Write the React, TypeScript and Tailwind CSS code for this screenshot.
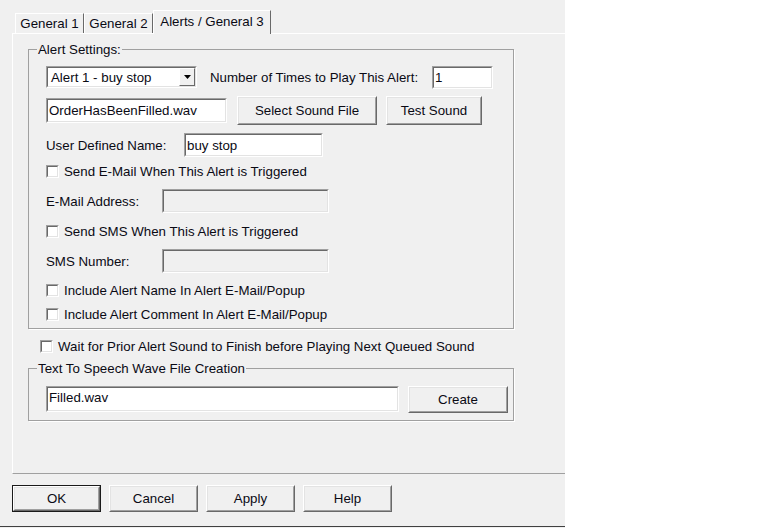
import React from 'react';

type BoxProps = {
  className?: string;
  disabled?: boolean;
  children?: React.ReactNode;
};

// Classic sunken edit box
const Sunken = ({ className = '', disabled = false, children }: BoxProps) => (
  <div
    className={`border border-t-[#a0a0a0] border-l-[#a0a0a0] border-r-white border-b-white ${className}`}
  >
    <div
      className={`flex h-full w-full items-center border border-t-[#696969] border-l-[#696969] border-r-[#e3e3e3] border-b-[#e3e3e3] pl-px ${
        disabled ? 'bg-[#f0f0f0]' : 'bg-white'
      }`}
    >
      {children}
    </div>
  </div>
);

type ButtonProps = {
  label: string;
  className?: string;
  isDefault?: boolean;
};

const Button = ({ label, className = '', isDefault = false }: ButtonProps) => (
  <button
    type="button"
    className={`block ${isDefault ? 'border border-[#1a1a1a]' : ''} ${className}`}
  >
    <div className="h-full border border-t-white border-l-white border-r-[#696969] border-b-[#696969]">
      <div className="flex h-full items-center justify-center border border-t-[#e3e3e3] border-l-[#e3e3e3] border-r-[#a0a0a0] border-b-[#a0a0a0] bg-[#f0f0f0]">
        {label}
      </div>
    </div>
  </button>
);

const Check = ({ label, className = '' }: { label: string; className?: string }) => (
  <div className={`flex items-center gap-[5px] ${className}`}>
    <span className="block h-[13px] w-[13px] border border-t-[#a0a0a0] border-l-[#a0a0a0] border-r-white border-b-white">
      <span className="block h-full w-full border border-t-[#696969] border-l-[#696969] border-r-[#e3e3e3] border-b-[#e3e3e3] bg-white" />
    </span>
    <span className="whitespace-nowrap">{label}</span>
  </div>
);

const Combo = () => (
  <Sunken className="h-[22px] w-[151px]">
    <span className="flex-1 pl-[2px]">Alert 1 - buy stop</span>
    <span className="h-full w-[16px] border border-t-white border-l-white border-r-[#696969] border-b-[#696969] bg-[#f0f0f0]">
      <span className="flex h-full items-center justify-center">
        <svg width="7" height="4" viewBox="0 0 7 4">
          <path d="M0 0h7L3.5 4z" fill="#000" />
        </svg>
      </span>
    </span>
  </Sunken>
);

export default function App() {
  return (
    <div className="flex h-[528px] w-[565px] flex-col bg-[#f0f0f0] pt-[10px] font-['Liberation_Sans',Arial,sans-serif] text-[13.3px] leading-[15px] text-[#0a0a14]">
      {/* tab strip */}
      <div className="flex h-[23px] items-end pl-[15px]">
        <div className="flex h-[20px] w-[69px] items-center justify-center border border-b-0 border-t-white border-l-white border-r-[#696969]">
          General 1
        </div>
        <div className="flex h-[20px] w-[69px] items-center justify-center border border-b-0 border-t-white border-l-white border-r-[#696969]">
          General 2
        </div>
        <div className="relative z-10 -mb-px flex h-[24px] w-[118px] items-start justify-center border border-b-0 border-t-white border-l-white border-r-[#696969] bg-[#f0f0f0] pt-[3px]">
          Alerts / General 3
        </div>
      </div>

      {/* tab page */}
      <div className="ml-[12px] h-[441px] w-[553px] border-t border-l border-b border-t-white border-l-white border-b-[#a0a0a0] pt-[8px] pl-[15px]">
        <fieldset className="w-[486px] border border-[#a0a0a0] pl-[8px] pb-[4px] shadow-[1px_1px_0_#fff]">
          <legend className="px-px">Alert Settings:</legend>
          <div className="ml-[9px] flex flex-col">
            <div className="mt-[8px] flex h-[24px] items-center">
              <Combo />
              <span className="ml-[13px] w-[222px] whitespace-nowrap">Number of Times to Play This Alert:</span>
              <Sunken className="h-[23px] w-[61px]">1</Sunken>
            </div>

            <div className="mt-[7px] flex h-[29px] items-center">
              <Sunken className="h-[25px] w-[181px]">OrderHasBeenFilled.wav</Sunken>
              <Button label="Select Sound File" className="ml-[10px] h-[29px] w-[140px]" />
              <Button label="Test Sound" className="ml-[9px] h-[29px] w-[96px]" />
            </div>

            <div className="mt-[8px] flex h-[24px] items-center">
              <span className="w-[138px]">User Defined Name:</span>
              <Sunken className="h-[24px] w-[139px]">buy stop</Sunken>
            </div>

            <Check label="Send E-Mail When This Alert is Triggered" className="mt-[4px] h-[20px]" />

            <div className="mt-[8px] flex h-[24px] items-center">
              <span className="w-[116px]">E-Mail Address:</span>
              <Sunken disabled className="h-[24px] w-[167px]" />
            </div>

            <Check label="Send SMS When This Alert is Triggered" className="mt-[8px] h-[20px]" />

            <div className="mt-[8px] flex h-[24px] items-center">
              <span className="w-[116px]">SMS Number:</span>
              <Sunken disabled className="h-[24px] w-[167px]" />
            </div>

            <Check label="Include Alert Name In Alert E-Mail/Popup" className="mt-[7px] h-[20px]" />
            <Check label="Include Alert Comment In Alert E-Mail/Popup" className="mt-[4px] h-[20px]" />
          </div>
        </fieldset>

        <Check
          label="Wait for Prior Alert Sound to Finish before Playing Next Queued Sound"
          className="mt-[7px] ml-[12px] h-[20px]"
        />

        <fieldset className="mt-[5px] w-[486px] border border-[#a0a0a0] pl-[8px] pb-[7px] shadow-[1px_1px_0_#fff]">
          <legend className="px-px">Text To Speech Wave File Creation</legend>
          <div className="mt-[10px] ml-[9px] flex items-start">
            <Sunken className="h-[26px] w-[353px]">
              <span className="self-start pt-[2px]">Filled.wav</span>
            </Sunken>
            <Button label="Create" className="ml-[9px] h-[27px] w-[100px]" />
          </div>
        </fieldset>
      </div>

      {/* dialog buttons */}
      <div className="mt-[11px] ml-[12px] flex gap-[8px]">
        <Button label="OK" isDefault className="h-[27px] w-[89px]" />
        <Button label="Cancel" className="h-[27px] w-[89px]" />
        <Button label="Apply" className="h-[27px] w-[89px]" />
        <Button label="Help" className="h-[27px] w-[89px]" />
      </div>

      <div className="mt-auto mb-px h-px bg-[#404040]" />
    </div>
  );
}
